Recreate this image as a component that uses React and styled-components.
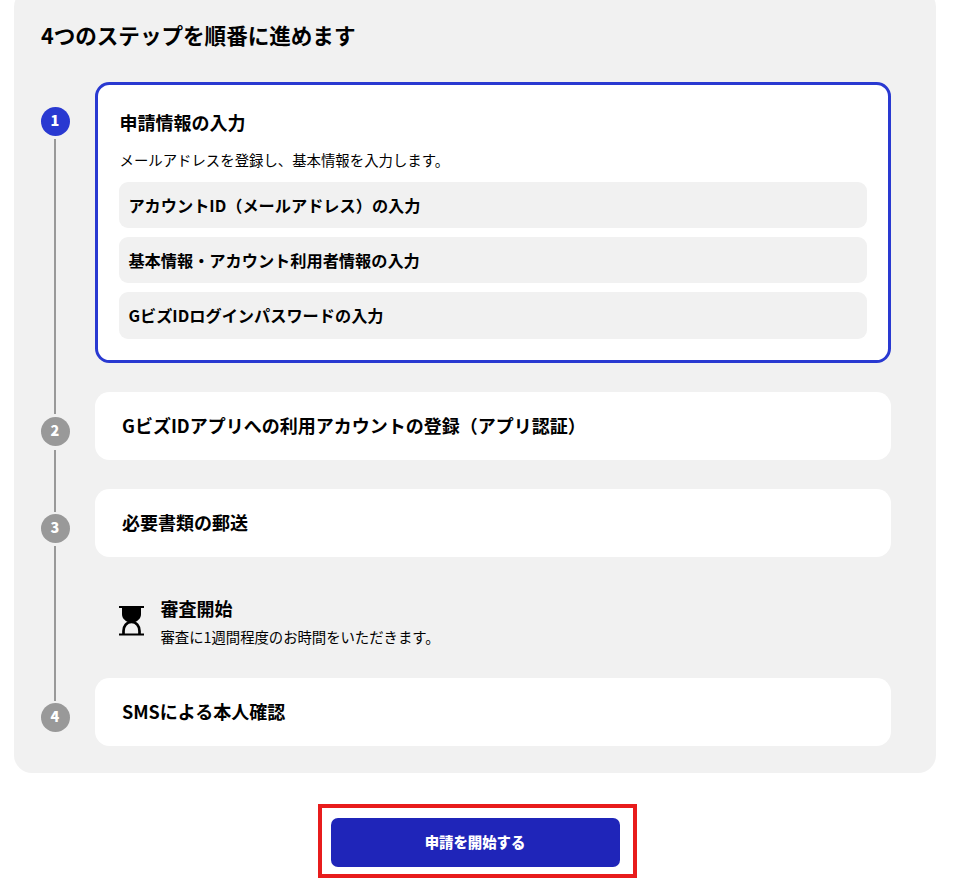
import React from "react"
import styled, { createGlobalStyle } from "styled-components"

const colors = {
  black: "#000",
  white: "#fff",
  panel: "#f1f1f1",
  grey: "#999",
  blue: "#2939d1",
  blueDark: "#1f25b9",
  red: "#e81c1c",
}

const GlobalStyle = createGlobalStyle`
  * {
    box-sizing: border-box;
  }
  body {
    margin: 0;
    overflow: hidden;
    background: ${colors.white};
    color: ${colors.black};
    font-family: "Noto Sans CJK JP", sans-serif;
  }
  h2, h3, p, ul, ol {
    margin: 0;
    padding: 0;
    list-style: none;
  }
`

const Page = styled.main`
  width: 922px;
  margin: -11px 0 0 14px;
`

const Panel = styled.section`
  height: 784px;
  padding: 30px 45px 0 27px;
  background: ${colors.panel};
  border-radius: 18px;
`

const Heading = styled.h2`
  height: 63px;
  font-size: 21.6px;
  font-weight: 700;
  line-height: 32px;
  letter-spacing: -0.04px;
`

const StepRow = styled.li`
  display: flex;
  gap: 25px;
`

const Rail = styled.div`
  display: flex;
  flex-direction: column;
  align-items: center;
  gap: 3px;
  width: 29px;
  margin: 25px 0 ${props => (props.$shortGap ? "-23px" : "-22px")};
`

const Badge = styled.span`
  flex: none;
  width: 29px;
  height: 29px;
  padding-right: 1px;
  border-radius: 50%;
  background: ${props => (props.$active ? colors.blue : colors.grey)};
  color: ${colors.white};
  font-size: 14.4px;
  font-weight: 900;
  line-height: 26px;
  text-align: center;
`

const Line = styled.span`
  flex: 1;
  width: 2px;
  margin-top: ${props => (props.$offset ? "1px" : 0)};
  margin-right: 1px;
  background: ${colors.grey};
`

const StepBody = styled.div`
  flex: 1;
  padding-bottom: ${props => (props.$last ? 0 : "29px")};
`

const Card = styled.div`
  height: 68px;
  padding: 20px 27px;
  border-radius: 14.4px;
  background: ${colors.white};
`

const ActiveCard = styled(Card)`
  height: 281px;
  padding: 24px 21px 0;
  border: 3px solid ${colors.blue};
`

const Title = styled.h3`
  font-size: 18px;
  font-weight: 700;
  line-height: 27px;
`

const CardTitle = styled(Title)`
  padding-left: 0.5px;
`

const Text = styled.p`
  font-size: 14.4px;
  line-height: 22px;
`

const CardText = styled(Text)`
  padding: 13px 0 11px 0.5px;
`

const TaskList = styled.ul`
  display: grid;
  gap: 9px;
`

const Task = styled.li`
  height: 46px;
  padding: 0 9.4px;
  border-radius: 9px;
  background: ${colors.panel};
  font-size: 16.2px;
  font-weight: 700;
  line-height: 47px;

  &:last-child {
    height: 47px;
  }
`

const Review = styled.div`
  display: flex;
  gap: 16.5px;
  height: 92px;
  padding: 38px 0 0 24px;

  svg {
    flex: none;
    margin-top: 11px;
  }
`

const ReviewText = styled(Text)`
  padding-top: 4px;
  letter-spacing: -0.05px;
`

const Footer = styled.div`
  display: flex;
  justify-content: center;
  padding: 31px 0 0 4px;
`

const ButtonFrame = styled.div`
  width: 319px;
  height: 74px;
  padding: 10px 9px;
  border: 4px solid ${colors.red};
`

const StartButton = styled.button`
  display: block;
  width: 289px;
  height: 49px;
  padding: 0 0 2px;
  border: none;
  border-radius: 7px;
  background: ${colors.blueDark};
  color: ${colors.white};
  font-family: inherit;
  font-size: 14.4px;
  font-weight: 900;
`

const Hourglass = () => (
  <svg width="25" height="31" viewBox="0 0 25 31" fill="none">
    <path d="M3 1h19v7c0 4-2.500 6.500-6 8H9C5.500 14.500 3 12 3 8z" fill="#000" />
    <path
      d="M4.500 29v-4c0-5 3.200-9 8-9s8 4 8 9v4"
      stroke="#000"
      strokeWidth="2.700"
    />
    <path d="M0 1h25M0 28.500h25" stroke="#000" strokeWidth="2" />
  </svg>
)

const Step = ({ number, active, last, children }) => (
  <StepRow>
    <Rail $shortGap={number > 1}>
      <Badge $active={active}>{number}</Badge>
      {!last && <Line $offset={number === 2} />}
    </Rail>
    <StepBody $last={last}>{children}</StepBody>
  </StepRow>
)

const tasks = [
  "アカウントID（メールアドレス）の入力",
  "基本情報・アカウント利用者情報の入力",
  "GビズIDログインパスワードの入力",
]

const App = () => {
  return (
    <>
      <GlobalStyle />
      <Page>
        <Panel>
          <Heading>4つのステップを順番に進めます</Heading>
          <ol>
            <Step number={1} active>
              <ActiveCard>
                <CardTitle>申請情報の入力</CardTitle>
                <CardText>
                  メールアドレスを登録し、基本情報を入力します。
                </CardText>
                <TaskList>
                  {tasks.map(task => (
                    <Task key={task}>{task}</Task>
                  ))}
                </TaskList>
              </ActiveCard>
            </Step>
            <Step number={2}>
              <Card>
                <Title>GビズIDアプリへの利用アカウントの登録（アプリ認証）</Title>
              </Card>
            </Step>
            <Step number={3}>
              <Card>
                <Title>必要書類の郵送</Title>
              </Card>
              <Review>
                <Hourglass />
                <div>
                  <Title>審査開始</Title>
                  <ReviewText>審査に1週間程度のお時間をいただきます。</ReviewText>
                </div>
              </Review>
            </Step>
            <Step number={4} last>
              <Card>
                <Title>SMSによる本人確認</Title>
              </Card>
            </Step>
          </ol>
        </Panel>
        <Footer>
          <ButtonFrame>
            <StartButton type="button">申請を開始する</StartButton>
          </ButtonFrame>
        </Footer>
      </Page>
    </>
  )
}

export default App
